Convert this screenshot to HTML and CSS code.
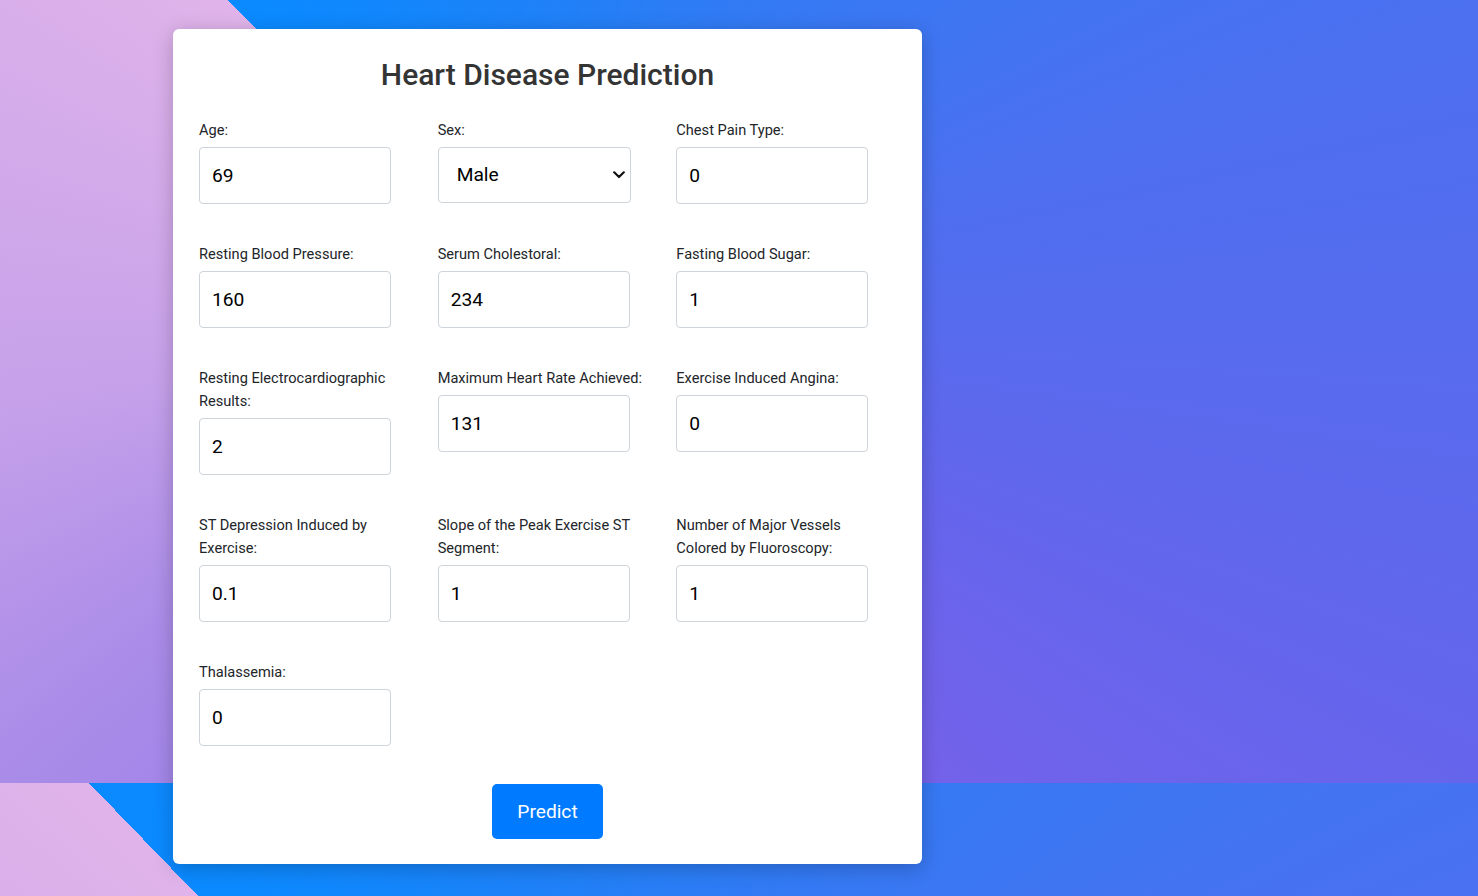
FILE: index.html
```html
<!DOCTYPE html>
<html lang="en">
<head>
<meta charset="utf-8">
<title>Heart Disease Prediction</title>
<link rel="stylesheet" href="styles.css">
</head>
<body>
<main class="card">
  <h1 class="title">Heart Disease Prediction</h1>
  <form class="form">
    <div class="fields">
      <div class="group">
        <label class="label" for="age">Age:</label>
        <input class="input" id="age" type="text" value="69">
      </div>
      <div class="group">
        <label class="label" for="sex">Sex:</label>
        <div class="select-wrap">
          <select class="select" id="sex">
            <option>Male</option>
            <option>Female</option>
          </select>
          <svg class="chevron" width="12" height="8" viewBox="0 0 12 8"><path d="M1.2 1.3 L6 6 L10.8 1.3" fill="none" stroke="#111" stroke-width="2.2" stroke-linecap="round" stroke-linejoin="round"/></svg>
        </div>
      </div>
      <div class="group">
        <label class="label" for="cp">Chest Pain Type:</label>
        <input class="input" id="cp" type="text" value="0">
      </div>
      <div class="group">
        <label class="label" for="bp">Resting Blood Pressure:</label>
        <input class="input" id="bp" type="text" value="160">
      </div>
      <div class="group">
        <label class="label" for="chol">Serum Cholestoral:</label>
        <input class="input" id="chol" type="text" value="234">
      </div>
      <div class="group">
        <label class="label" for="fbs">Fasting Blood Sugar:</label>
        <input class="input" id="fbs" type="text" value="1">
      </div>
      <div class="group">
        <label class="label" for="ecg">Resting Electrocardiographic Results:</label>
        <input class="input" id="ecg" type="text" value="2">
      </div>
      <div class="group">
        <label class="label" for="hr">Maximum Heart Rate Achieved:</label>
        <input class="input" id="hr" type="text" value="131">
      </div>
      <div class="group">
        <label class="label" for="ang">Exercise Induced Angina:</label>
        <input class="input" id="ang" type="text" value="0">
      </div>
      <div class="group">
        <label class="label" for="st">ST Depression Induced by Exercise:</label>
        <input class="input" id="st" type="text" value="0.1">
      </div>
      <div class="group">
        <label class="label" for="slope">Slope of the Peak Exercise ST Segment:</label>
        <input class="input" id="slope" type="text" value="1">
      </div>
      <div class="group">
        <label class="label" for="ca">Number of Major Vessels Colored by Fluoroscopy:</label>
        <input class="input" id="ca" type="text" value="1">
      </div>
      <div class="group">
        <label class="label" for="thal">Thalassemia:</label>
        <input class="input" id="thal" type="text" value="0">
      </div>
    </div>
    <div class="actions">
      <button class="button" type="button">Predict</button>
    </div>
  </form>
</main>
</body>
</html>
```

FILE: styles.css
```css
html {
  height: 100%;
}

body {
  margin: 0;
  min-height: 100%;
  overflow: hidden;
  font-family: Roboto, "Noto Sans", "Liberation Sans", sans-serif;
  background-image: conic-gradient(from 316deg at 537px 464px,
    #0a8aff 0deg,
    #2180f7 50deg,
    #3d76f2 96deg,
    #4c70f0 116deg,
    #6565ec 160deg,
    #7462ea 183deg,
    #a98be8 273deg,
    #c6a1ea 305deg,
    #e0b4ea 360deg);
  background-size: 1478px 927px;
  background-position: 0 -144px;
  background-repeat: repeat;
}

.card {
  box-sizing: border-box;
  width: 749px;
  margin: 29px 0 0 173px;
  padding: 25px 26px;
  background: #ffffff;
  border-radius: 6px;
  box-shadow: 0 4px 20px rgba(0, 0, 0, 0.22);
}

.title {
  margin: 0 0 22.6px;
  padding-top: 1.5px;
  text-align: center;
  font-size: 30px;
  line-height: 38.4px;
  font-weight: 500;
  color: #343434;
}

.form {
  margin: 0;
}

.fields {
  display: grid;
  grid-template-columns: repeat(3, 1fr);
  column-gap: 19px;
  row-gap: 37px;
  align-items: start;
}

.group {
  display: flex;
  flex-direction: column;
  align-items: flex-start;
}

.label {
  display: block;
  max-width: 212px;
  font-size: 14.6px;
  line-height: 23px;
  color: #222529;
  padding-top: 2px;
  margin-bottom: 5px;
}

.input,
.select {
  box-sizing: border-box;
  width: 192px;
  height: 57px;
  margin: 0;
  border: 1px solid #ced4da;
  border-radius: 4px;
  padding: 0 12px;
  font-family: Roboto, "Noto Sans", "Liberation Sans", sans-serif;
  font-size: 19.2px;
  color: #000;
  background: #fff;
  outline: none;
}

.select-wrap {
  position: relative;
}

.select {
  -webkit-appearance: none;
  appearance: none;
  width: 193px;
  height: 56px;
  padding-left: 18px;
}

.chevron {
  position: absolute;
  right: 6px;
  top: 24px;
  pointer-events: none;
}

.actions {
  display: flex;
  justify-content: center;
  margin-top: 38.5px;
}

.button {
  border: none;
  border-radius: 5px;
  background: #007bff;
  color: #fff;
  font-family: Roboto, "Noto Sans", "Liberation Sans", sans-serif;
  font-size: 19.2px;
  line-height: 31px;
  padding: 12px 25px;
  cursor: pointer;
}
```
